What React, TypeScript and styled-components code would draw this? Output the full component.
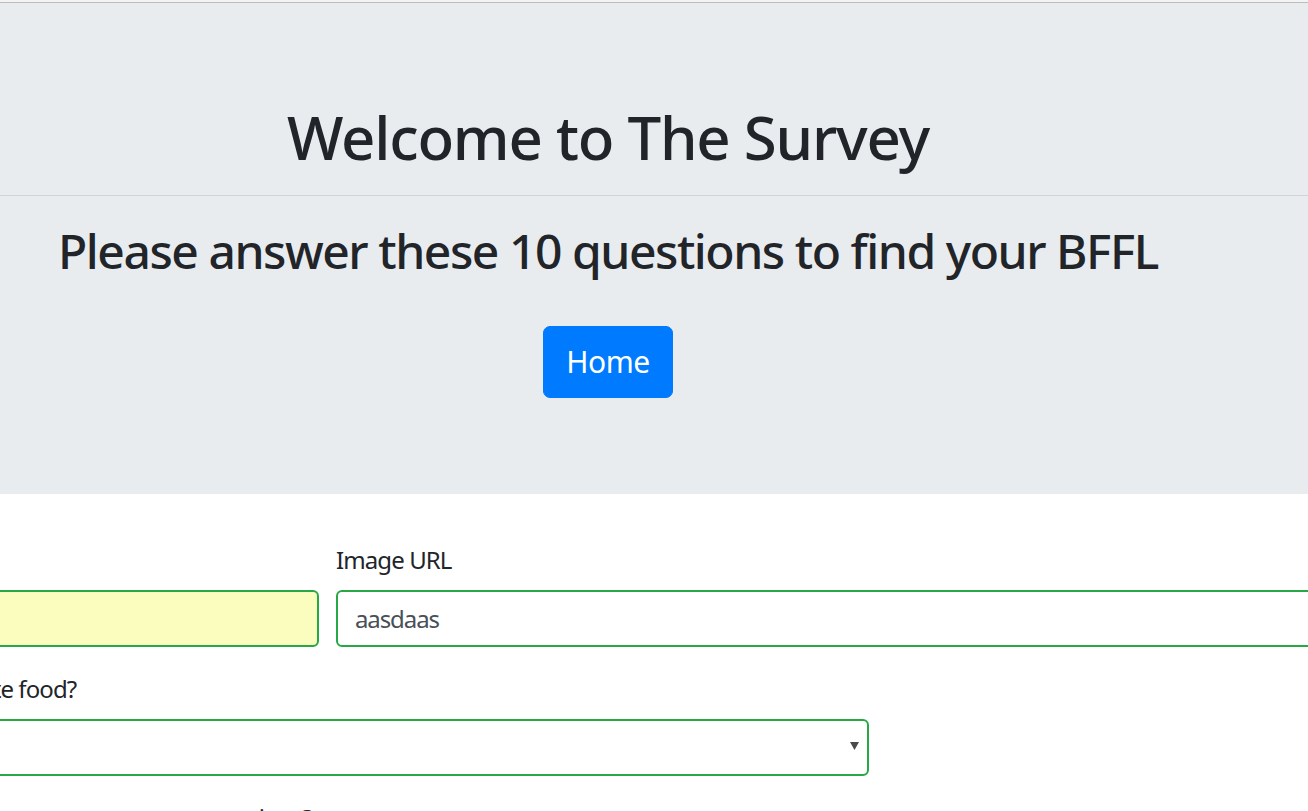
import React from "react";
import styled, { createGlobalStyle } from "styled-components";

const GlobalStyle = createGlobalStyle`
  html, body {
    margin: 0;
    padding: 0;
    background: #ffffff;
    overflow: hidden;
  }
  body {
    font-family: "Noto Sans", "Open Sans", sans-serif;
    color: #212529;
  }
  * {
    box-sizing: border-box;
  }
`;

const Page = styled.div`
  width: 1308px;
  height: 811px;
  overflow: hidden;
  border-top: 2px solid #f3f3f3;
`;

const BrowserEdge = styled.div`
  height: 1px;
  background: #bdbdbd;
`;

const Jumbotron = styled.header`
  background: #e9ecef;
  padding: 98px 0 96px;
  margin-bottom: 48px;
`;

const Centered = styled.div`
  width: 1216px;
  display: flex;
  flex-direction: column;
  align-items: center;
  text-align: center;
`;

const Title = styled.h1`
  margin: 0;
  font-size: 60px;
  font-weight: 500;
  line-height: 1.2;
  letter-spacing: -1.25px;
`;

const Rule = styled.hr`
  margin: 22px 0 26px;
  border: 0;
  border-top: 1px solid rgba(0, 0, 0, 0.1);
`;

const Subtitle = styled.h2`
  margin: 0 0 46px;
  font-size: 48px;
  font-weight: 500;
  line-height: 1.2;
  letter-spacing: -1.45px;
`;

const HomeButton = styled.button`
  font-family: inherit;
  font-size: 30px;
  line-height: 1.5;
  letter-spacing: -0.5px;
  padding: 12px 22px;
  height: 72px;
  color: #ffffff;
  background: #007bff;
  border: 1px solid #007bff;
  border-radius: 7px;
  cursor: pointer;
`;

const Form = styled.form`
  margin-left: -202px;
  width: 1600px;
`;

const Row = styled.div`
  display: flex;
  gap: 17px;
`;

const Group = styled.div<{ $width?: number }>`
  display: flex;
  flex-direction: column;
  margin-bottom: 24px;
  ${(p) => (p.$width ? `width: ${p.$width}px; flex: none;` : "flex: 1;")}
`;

const Label = styled.label`
  font-size: 24px;
  line-height: 36px;
  letter-spacing: -0.9px;
  margin-bottom: 12px;
  white-space: nowrap;
`;

const Input = styled.input<{ $filled?: boolean }>`
  height: 57px;
  padding: 9px 17px;
  font-family: inherit;
  font-size: 24px;
  letter-spacing: -1.1px;
  color: #495057;
  background: ${(p) => (p.$filled ? "#fafdbe" : "#ffffff")};
  border: 2px solid #28a745;
  border-radius: 6px;
  outline: none;
`;

const SelectWrap = styled.div`
  position: relative;
  width: 1071px;
`;

const Select = styled.select`
  width: 100%;
  height: 57px;
  padding: 9px 18px;
  font-family: inherit;
  font-size: 24px;
  color: #495057;
  background: #ffffff;
  border: 2px solid #28a745;
  border-radius: 6px;
  appearance: none;
  outline: none;
`;

const Caret = styled.svg`
  position: absolute;
  right: 10px;
  top: 23px;
  pointer-events: none;
`;

export default function App() {
  return (
    <>
      <GlobalStyle />
      <Page>
        <BrowserEdge />
        <Jumbotron>
          <Centered>
            <Title>Welcome to The Survey</Title>
          </Centered>
          <Rule />
          <Centered>
            <Subtitle>Please answer these 10 questions to find your BFFL</Subtitle>
            <HomeButton type="button">Home</HomeButton>
          </Centered>
        </Jumbotron>

        <Form>
          <Row>
            <Group $width={521}>
              <Label htmlFor="name">Name</Label>
              <Input id="name" $filled defaultValue="" />
            </Group>
            <Group>
              <Label htmlFor="photo">Image URL</Label>
              <Input id="photo" defaultValue="aasdaas" />
            </Group>
          </Row>
          <Group>
            <Label htmlFor="q1">What is your favorite food?</Label>
            <SelectWrap>
              <Select id="q1" defaultValue="">
                <option value=""></option>
                <option value="1">1</option>
                <option value="2">2</option>
                <option value="3">3</option>
                <option value="4">4</option>
                <option value="5">5</option>
              </Select>
              <Caret width="9" height="8" viewBox="0 0 9 8">
                <path d="M0 0 H9 L4.5 8 Z" fill="#4a4a4a" />
              </Caret>
            </SelectWrap>
          </Group>
          <Group>
            <Label htmlFor="q2">Which of these sums up your summer mornings?</Label>
          </Group>
        </Form>
      </Page>
    </>
  );
}
